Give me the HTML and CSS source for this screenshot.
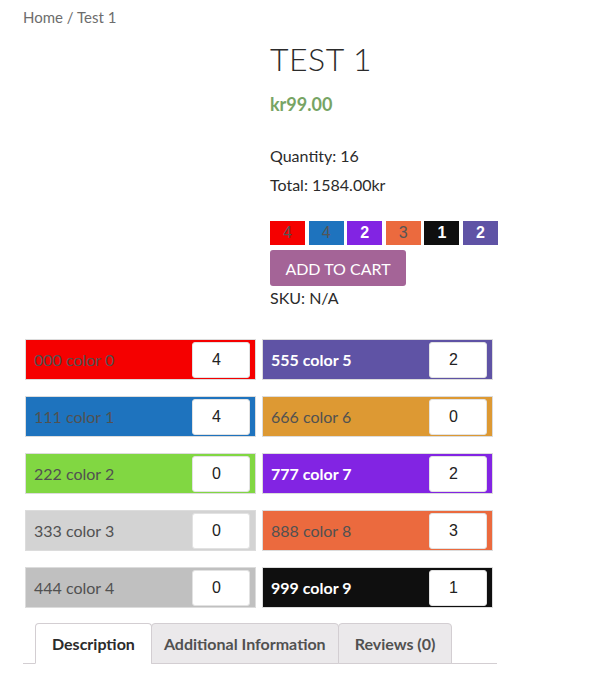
FILE: index.html
```html
<!DOCTYPE html>
<html>
<head>
<meta charset="utf-8">
<link rel="stylesheet" href="styles.css">
</head>
<body>
<div class="page">
  <nav class="crumbs">Home / Test 1</nav>
  <div class="product">
    <div class="gallery"></div>
    <div class="summary">
      <h1 class="title">TEST 1</h1>
      <p class="price">kr99.00</p>
      <p class="line qty">Quantity: 16</p>
      <p class="line">Total: 1584.00kr</p>
      <div class="badges">
        <span class="badge c0">4</span>
        <span class="badge c1">4</span>
        <span class="badge c7 light">2</span>
        <span class="badge c8">3</span>
        <span class="badge c9 light">1</span>
        <span class="badge c5 light">2</span>
      </div>
      <button class="cart">ADD TO CART</button>
      <p class="sku">SKU: N/A</p>
    </div>
  </div>
  <div class="colors">
    <div class="col">
      <div class="swatch c0"><span class="label">000 color 0</span><input class="num" type="text" value="4"></div>
      <div class="swatch c1"><span class="label">111 color 1</span><input class="num" type="text" value="4"></div>
      <div class="swatch c2"><span class="label">222 color 2</span><input class="num" type="text" value="0"></div>
      <div class="swatch c3"><span class="label">333 color 3</span><input class="num" type="text" value="0"></div>
      <div class="swatch c4"><span class="label">444 color 4</span><input class="num" type="text" value="0"></div>
    </div>
    <div class="col">
      <div class="swatch c5 light"><span class="label">555 color 5</span><input class="num" type="text" value="2"></div>
      <div class="swatch c6"><span class="label">666 color 6</span><input class="num" type="text" value="0"></div>
      <div class="swatch c7 light"><span class="label">777 color 7</span><input class="num" type="text" value="2"></div>
      <div class="swatch c8"><span class="label">888 color 8</span><input class="num" type="text" value="3"></div>
      <div class="swatch c9 light"><span class="label">999 color 9</span><input class="num" type="text" value="1"></div>
    </div>
  </div>
  <ul class="tabs">
    <li class="tab active">Description</li>
    <li class="tab info">Additional Information</li>
    <li class="tab">Reviews (0)</li>
  </ul>
</div>
</body>
</html>
```

FILE: styles.css
```css
* { box-sizing: border-box; }
body {
  margin: 0;
  font-family: Lato, "Open Sans", sans-serif;
  color: #2b2b2b;
  background: #fff;
}
.page {
  width: 474px;
  margin-left: 23px;
  padding-top: 8px;
}
.crumbs {
  font-size: 15px;
  line-height: 18px;
  color: #6d6d6d;
}
.product {
  display: flex;
}
.gallery {
  width: 247px;
  flex: none;
}
.summary {
  flex: 1;
  display: flex;
  flex-direction: column;
  align-items: flex-start;
}
.title {
  margin: 14px 0 0;
  font-size: 32px;
  line-height: 38px;
  font-weight: 300;
  color: #2b2b2b;
  letter-spacing: 0.5px;
}
.price {
  margin: 15px 0 0;
  font-size: 18px;
  line-height: 22px;
  font-weight: 700;
  color: #77a464;
}
.line {
  margin: 0;
  font-size: 16px;
  line-height: 29px;
}
.qty { margin-top: 26px; }
.badges {
  display: flex;
  gap: 3.6px;
  margin-top: 22px;
}
.badge {
  width: 35px;
  height: 24px;
  display: flex;
  align-items: center;
  justify-content: center;
  font-family: "Liberation Sans", Arial, sans-serif;
  font-size: 16px;
  color: #555;
}
.badge.light { color: #fff; font-weight: 700; }
.cart {
  margin-top: 5px;
  width: 136px;
  height: 36px;
  border: 0;
  border-radius: 3px;
  background: #a46497;
  color: #fff;
  font-family: Lato, sans-serif;
  font-size: 16px;
  padding: 0;
}
.sku {
  margin: 0;
  font-size: 16px;
  line-height: 24px;
}
.colors {
  display: flex;
  gap: 6px;
  margin-top: 29px;
  margin-left: 2px;
}
.col {
  display: flex;
  flex-direction: column;
  gap: 16px;
  width: 231px;
}
.swatch {
  height: 41px;
  border: 1px solid #dcdcdc;
  display: flex;
  align-items: center;
  justify-content: space-between;
  padding: 0 5px 0 8px;
}
.label {
  font-size: 16px;
  color: #515151;
}
.swatch.light .label { color: #fff; font-weight: 700; }
.num {
  width: 58px;
  height: 36px;
  border: 1px solid #e2e2e2;
  border-radius: 3px;
  background: #fff;
  font-family: "Liberation Sans", Arial, sans-serif;
  font-size: 16px;
  color: #222;
  padding: 0 0 0 19px;
}
.c0 { background: #f50000; }
.c1 { background: #1e73be; }
.c2 { background: #81d742; }
.c3 { background: #d3d3d3; }
.c4 { background: #c0c0c0; }
.c5 { background: #5f53a5; }
.c6 { background: #dd9933; }
.c7 { background: #8224e3; }
.c8 { background: #eb6a3e; }
.c9 { background: #0f0f0f; }
.tabs {
  list-style: none;
  margin: 15px 0 0;
  padding: 0 0 0 12px;
  display: flex;
  border-bottom: 1px solid #d3ced2;
}
.tab {
  height: 41px;
  margin-bottom: -1px;
  padding: 0 16px;
  display: flex;
  align-items: center;
  font-size: 16px;
  font-weight: 700;
  color: #515151;
  background: #ebe9eb;
  border: 1px solid #d3ced2;
  border-radius: 4px 4px 0 0;
  margin-right: -1px;
}
.tab.info { padding: 0 12px; }
.tab.active {
  background: #fff;
  color: #2b2b2b;
  border-bottom-color: #fff;
}
```
